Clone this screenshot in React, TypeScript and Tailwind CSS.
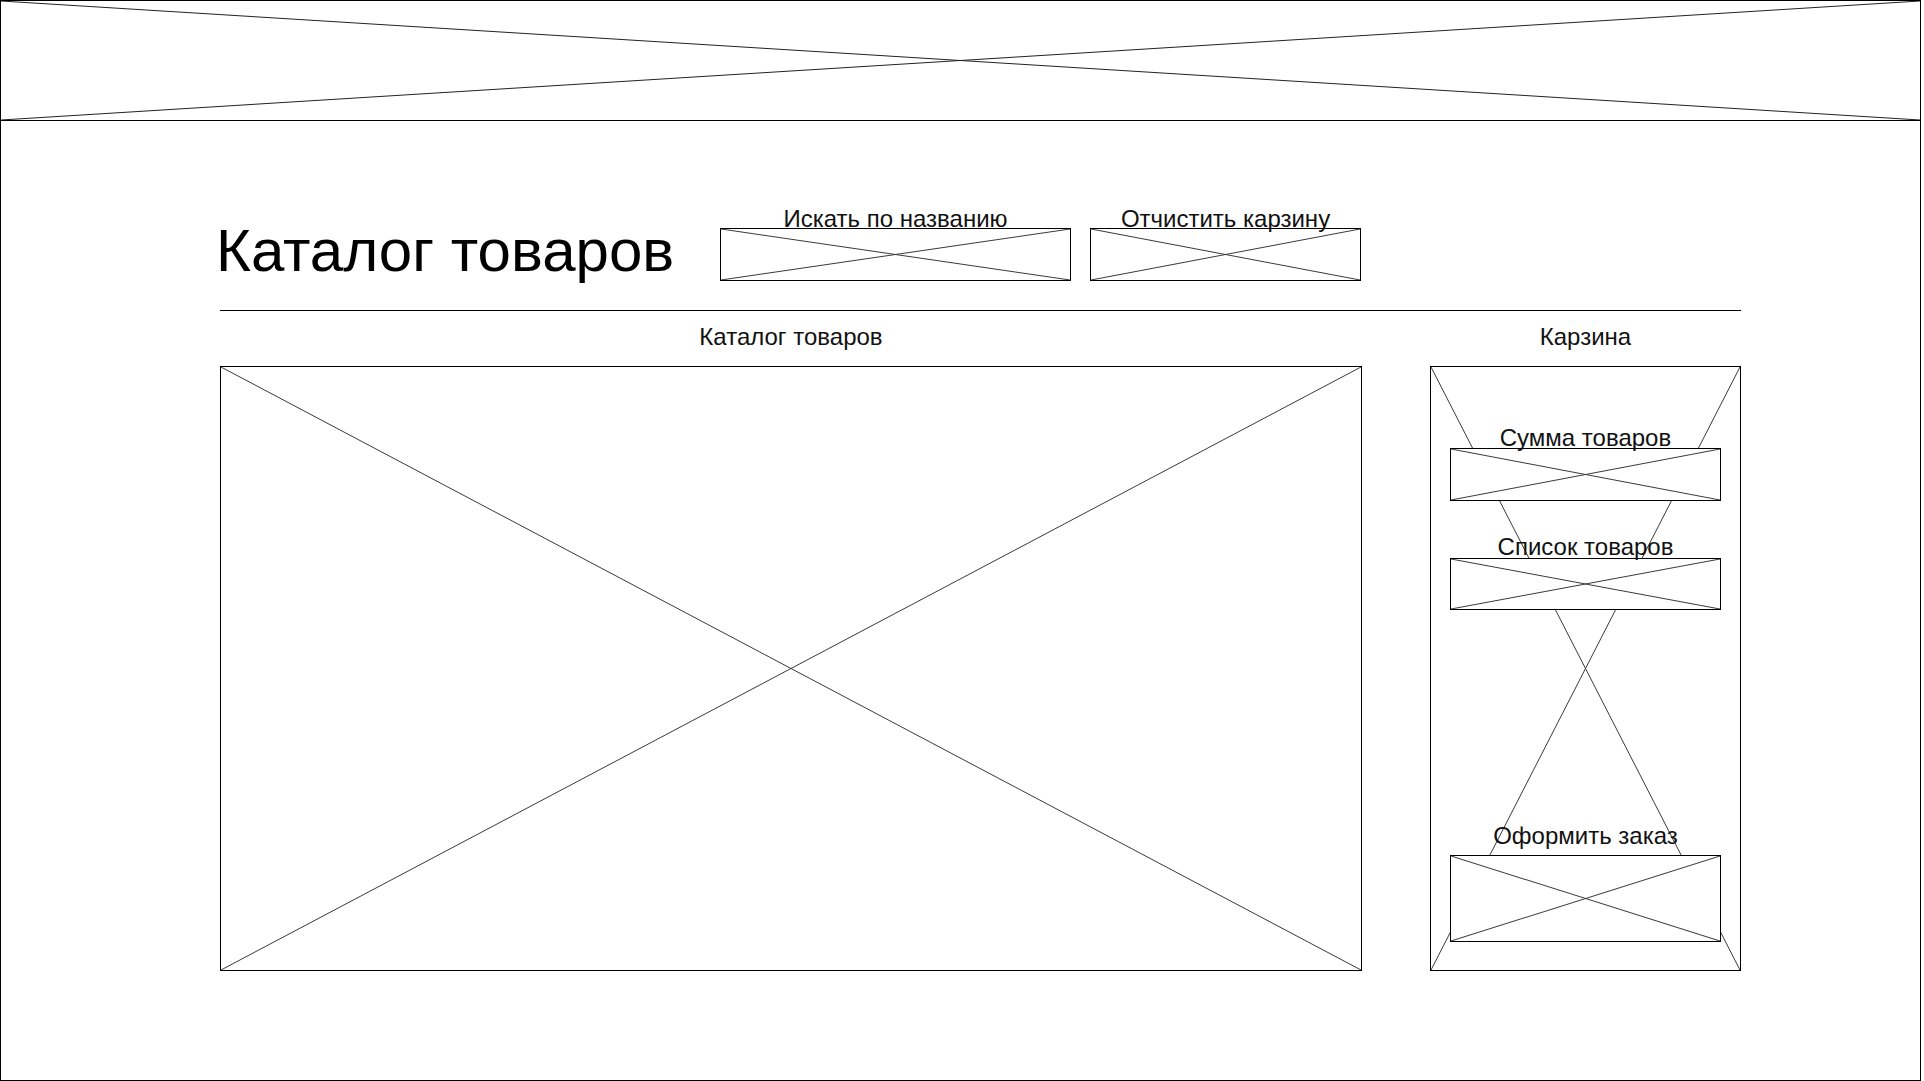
import React from 'react';

function Cross({ stroke = '#3a3a3a' }: { stroke?: string }) {
  return (
    <svg className="absolute inset-0 h-full w-full" preserveAspectRatio="none" viewBox="0 0 100 100">
      <line x1="0" y1="0" x2="100" y2="100" stroke={stroke} strokeWidth="1" vectorEffect="non-scaling-stroke" />
      <line x1="0" y1="100" x2="100" y2="0" stroke={stroke} strokeWidth="1" vectorEffect="non-scaling-stroke" />
    </svg>
  );
}

function XBox({ className = '' }: { className?: string }) {
  return (
    <div className={`relative border border-black bg-white ${className}`}>
      <Cross />
    </div>
  );
}

function Label({ children, className = '' }: { children: React.ReactNode; className?: string }) {
  return (
    <div className={`relative z-10 text-center text-[24px] leading-[24px] text-[#111] ${className}`}>{children}</div>
  );
}

export default function App() {
  return (
    <div
      className="flex h-[1081px] w-[1921px] flex-col border border-black bg-white text-black"
      style={{ fontFamily: '"Liberation Sans", Arial, sans-serif' }}
    >
      <header className="relative h-[120px] shrink-0 border-b border-black">
        <Cross stroke="#222" />
      </header>

      <main className="ml-[219px] flex w-[1521px] flex-col">
        <div className="mt-[86px] flex items-end">
          <h1 className="-ml-[4px] w-[504px] text-[60px] font-normal leading-[60px]">Каталог товаров</h1>
          <div className="flex w-[351px] flex-col">
            <Label className="mb-[-3px]">Искать по названию</Label>
            <XBox className="h-[53px]" />
          </div>
          <div className="ml-[19px] flex w-[271px] flex-col">
            <Label className="mb-[-3px]">Отчистить карзину</Label>
            <XBox className="h-[53px]" />
          </div>
        </div>

        <div className="mt-[29px] h-px w-full bg-black" />

        <div className="mt-[14px] flex gap-[68px]">
          <section className="flex w-[1142px] flex-col">
            <Label>Каталог товаров</Label>
            <XBox className="mt-[17px] h-[605px]" />
          </section>

          <section className="flex w-[311px] flex-col">
            <Label>Карзина</Label>
            <div className="relative mt-[17px] flex h-[605px] flex-col border border-black px-[19px] pt-[59px]">
              <Cross />
              <Label className="mb-[-2px]">Сумма товаров</Label>
              <XBox className="h-[53px]" />
              <Label className="mt-[34px] mb-[-1px]">Список товаров</Label>
              <XBox className="h-[52px]" />
              <Label className="mt-[214px] mb-[7px]">Оформить заказ</Label>
              <XBox className="h-[87px]" />
            </div>
          </section>
        </div>
      </main>
    </div>
  );
}
